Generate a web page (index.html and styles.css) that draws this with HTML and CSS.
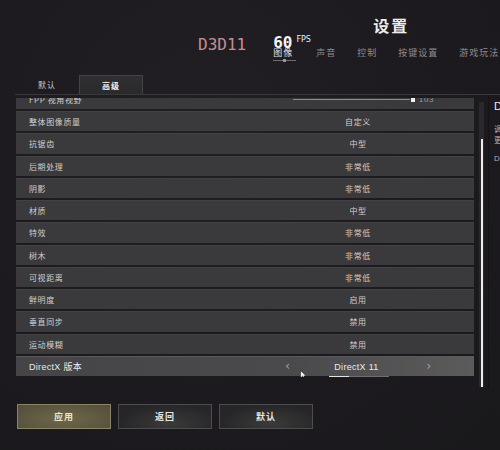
FILE: index.html
```html
<!DOCTYPE html>
<html lang="zh-CN">
<head>
<meta charset="utf-8">
<link rel="stylesheet" href="styles.css">
</head>
<body>
<div class="page">
  <header class="top">
    <div class="api">D3D11</div>
    <div class="fps">
      <div class="fps-line"><span class="fps-num">60</span><span class="fps-unit">FPS</span></div>
      <div class="fps-label">图像</div>
      <div class="fps-bar"><span class="fps-dot"></span></div>
    </div>
    <div class="head-right">
      <div class="title">设置</div>
      <nav class="nav">
        <span>声音</span>
        <span>控制</span>
        <span>按键设置</span>
        <span>游戏玩法</span>
      </nav>
    </div>
  </header>

  <div class="tabs">
    <div class="tab">默认</div>
    <div class="tab active">高级</div>
  </div>

  <div class="main">
    <div class="list">
      <div class="rows">
        <div class="row"><span class="label">FPP 视角视野</span><span class="value slider"><span class="track"></span><span class="knob"></span><span class="num">103</span></span></div>
        <div class="row"><span class="label">整体图像质量</span><span class="value">自定义</span></div>
        <div class="row"><span class="label">抗锯齿</span><span class="value">中型</span></div>
        <div class="row"><span class="label">后期处理</span><span class="value">非常低</span></div>
        <div class="row"><span class="label">阴影</span><span class="value">非常低</span></div>
        <div class="row"><span class="label">材质</span><span class="value">中型</span></div>
        <div class="row"><span class="label">特效</span><span class="value">非常低</span></div>
        <div class="row"><span class="label">树木</span><span class="value">非常低</span></div>
        <div class="row"><span class="label">可视距离</span><span class="value">非常低</span></div>
        <div class="row"><span class="label">鲜明度</span><span class="value">启用</span></div>
        <div class="row"><span class="label">垂直同步</span><span class="value">禁用</span></div>
        <div class="row"><span class="label">运动模糊</span><span class="value">禁用</span></div>
        <div class="row selected">
          <span class="label">DirectX 版本</span>
          <span class="value chooser">
            <span class="chev">‹</span>
            <span class="choice">DirectX 11<span class="pager"><span class="pager-on"></span></span></span>
            <span class="chev">›</span>
          </span>
        </div>
      </div>
      <svg class="cursor" width="7" height="10" viewBox="0 0 7 10"><path d="M0.5 0.5 L0.5 8 L2.5 6.3 L4 9.5 L5.2 9 L3.8 5.9 L6.3 5.9 Z" fill="#f2f2f2" stroke="#222" stroke-width="0.6"/></svg>
    </div>
    <div class="scroll"><div class="thumb"></div></div>
    <aside class="info">
      <div class="info-title">DirectX 版本</div>
      <div class="info-text">调整游戏使用的图形接口，</div>
      <div class="info-text">更改后需要重新启动游戏。</div>
      <div class="info-sub">DirectX 11</div>
    </aside>
  </div>

  <div class="buttons">
    <button class="btn primary">应用</button>
    <button class="btn">返回</button>
    <button class="btn">默认</button>
  </div>
</div>
</body>
</html>
```

FILE: styles.css
```css
* { box-sizing: border-box; }
html, body {
  margin: 0;
  padding: 0;
  width: 500px;
  height: 450px;
  overflow: hidden;
  background: #1d1b1f;
}
body {
  font-family: "Noto Sans CJK SC", "Noto Sans", sans-serif;
  color: #d2d2d2;
}
.page {
  width: 500px;
  height: 450px;
  overflow: hidden;
  background: radial-gradient(ellipse at 40% 30%, #221f24 0%, #1c1a1e 60%, #19181b 100%);
}

/* header */
.top {
  height: 75px;
  display: flex;
  align-items: flex-start;
  white-space: nowrap;
}
.api {
  flex-shrink: 0;
  margin: 37px 0 0 198px;
  font-family: "DejaVu Sans Mono", monospace;
  font-size: 16px;
  line-height: 16px;
  color: #c88e93;
}
.fps {
  flex-shrink: 0;
  margin: 35px 0 0 27px;
  width: 24px;
  display: flex;
  flex-direction: column;
}
.fps-line {
  display: flex;
  align-items: flex-start;
}
.fps-num {
  font-family: "DejaVu Sans Mono", monospace;
  font-weight: bold;
  font-size: 16px;
  line-height: 16px;
  color: #f4f4f4;
}
.fps-unit {
  font-family: "DejaVu Sans", sans-serif;
  font-size: 8px;
  line-height: 9px;
  color: #eee;
  margin-left: 4px;
}
.fps-label {
  margin-top: -3px;
  font-size: 9px;
  line-height: 10px;
  color: #e2e2e2;
  letter-spacing: 1px;
}
.fps-bar {
  margin-top: 2px;
  height: 1px;
  width: 23px;
  background: #6d6c70;
  position: relative;
}
.fps-dot {
  position: absolute;
  left: 10px;
  top: -1px;
  width: 3px;
  height: 3px;
  background: #9a999c;
}
.head-right {
  flex-shrink: 0;
  margin-left: 19px;
  display: flex;
  flex-direction: column;
}
.title {
  margin: 15px 0 0 57px;
  font-size: 16px;
  line-height: 20px;
  font-weight: bold;
  color: #ececec;
  letter-spacing: 2px;
}
.nav {
  margin-top: 12px;
  display: flex;
  gap: 21px;
  font-size: 9px;
  line-height: 12px;
  letter-spacing: 1px;
  color: #8c8b8f;
}

/* tabs */
.tabs {
  margin-left: 15px;
  height: 20px;
  display: flex;
  border-bottom: 1px solid #39383b;
}
.tab {
  width: 64px;
  height: 19px;
  display: flex;
  align-items: center;
  justify-content: center;
  font-size: 8px;
  letter-spacing: 1px;
  color: #c9c9c9;
}
.tab.active {
  background: linear-gradient(#2f2e31, #2a292c);
  border: 1px solid #434245;
  border-bottom: none;
  color: #f0f0f0;
  font-weight: bold;
}

/* main */
.main {
  margin-left: 16px;
  height: 293px;
  display: flex;
  align-items: flex-start;
}
.list {
  position: relative;
  flex: 0 0 458px;
  margin-top: 3px;
  height: 279px;
  overflow: hidden;
}
.rows {
  margin-top: -9.3px;
  display: flex;
  flex-direction: column;
  gap: 2px;
}
.row {
  height: 20.27px;
  display: grid;
  grid-template-columns: 266px 152px 1fr;
  align-items: center;
  background: #3a393b;
  border-top: 1px solid #424143;
  font-size: 8px;
  letter-spacing: 0.6px;
}
.label {
  padding-left: 13px;
  color: #d0d0d0;
}
.value {
  text-align: center;
  color: #cfcfcf;
}
.slider {
  display: flex;
  align-items: center;
  padding-left: 11px;
}
.track {
  width: 127px;
  height: 1px;
  background: #8a898c;
}
.knob {
  width: 4px;
  height: 5px;
  background: #f0f0f0;
  margin-left: 1px;
}
.num {
  margin-left: 4px;
  color: #9a9a9a;
  font-family: "Liberation Sans", sans-serif;
}
.row.selected {
  background: linear-gradient(90deg, #454446 0%, #4a494b 60%, #5c5b5c 100%);
  border-top: 1px solid #5a595b;
}
.row.selected .label {
  color: #eaeaea;
  font-family: "Liberation Sans", "Noto Sans CJK SC", sans-serif;
  font-size: 9px;
  letter-spacing: 0.3px;
}
.chooser {
  display: flex;
  align-items: center;
  justify-content: space-between;
  padding: 0 2px 0 3px;
}
.chev {
  font-family: "DejaVu Sans", sans-serif;
  font-size: 13px;
  line-height: 13px;
  color: #9c9b9e;
  margin-top: -2px;
}
.choice {
  position: relative;
  font-family: "Liberation Sans", sans-serif;
  font-size: 9px;
  color: #ececec;
  letter-spacing: 0.3px;
  margin-left: -4px;
}
.pager {
  position: absolute;
  left: -5px;
  top: 14px;
  width: 60px;
  height: 1.5px;
  background: #6f6e71;
}
.pager-on {
  display: block;
  width: 20px;
  height: 1.5px;
  background: #e4e4e4;
}
.cursor {
  position: absolute;
  left: 284px;
  top: 272px;
}
.scroll {
  flex: 0 0 5px;
  margin: 7px 0 0 5px;
  height: 285px;
  background: #2a292c;
  padding-top: 37px;
}
.thumb {
  margin-left: 1.5px;
  width: 2.2px;
  height: 248px;
  background: #ececec;
}
.info {
  flex: 1 1 auto;
  min-width: 0;
  margin-left: 4px;
  align-self: stretch;
  border-left: 1px solid #141316;
  padding: 4px 0 0 5px;
  overflow: hidden;
  white-space: nowrap;
}
.info-title {
  font-family: "Liberation Sans", "Noto Sans CJK SC", sans-serif;
  font-size: 11px;
  line-height: 14px;
  color: #ededed;
}
.info-text {
  font-size: 8px;
  line-height: 11px;
  color: #b0b0b0;
}
.info-title + .info-text { margin-top: 10px; }
.info-sub {
  margin-top: 8px;
  font-family: "Liberation Sans", sans-serif;
  font-size: 8px;
  line-height: 11px;
  color: #b0b0b0;
}

/* buttons */
.buttons {
  margin: 16px 0 0 17px;
  display: flex;
  gap: 7px;
}
.btn {
  width: 94px;
  height: 25px;
  font-family: "Noto Sans CJK SC", sans-serif;
  font-size: 9px;
  font-weight: bold;
  letter-spacing: 1px;
  color: #e4e4e4;
  border: 1px solid #4d4c4e;
  background: radial-gradient(ellipse at 55% 80%, #3c3b3a 0%, #262528 70%);
  padding: 0;
}
.btn.primary {
  border-color: #8b8462;
  background: radial-gradient(ellipse at 50% 60%, #6f6848 0%, #5b5540 70%, #524d3a 100%);
  color: #ece6cc;
}
```
